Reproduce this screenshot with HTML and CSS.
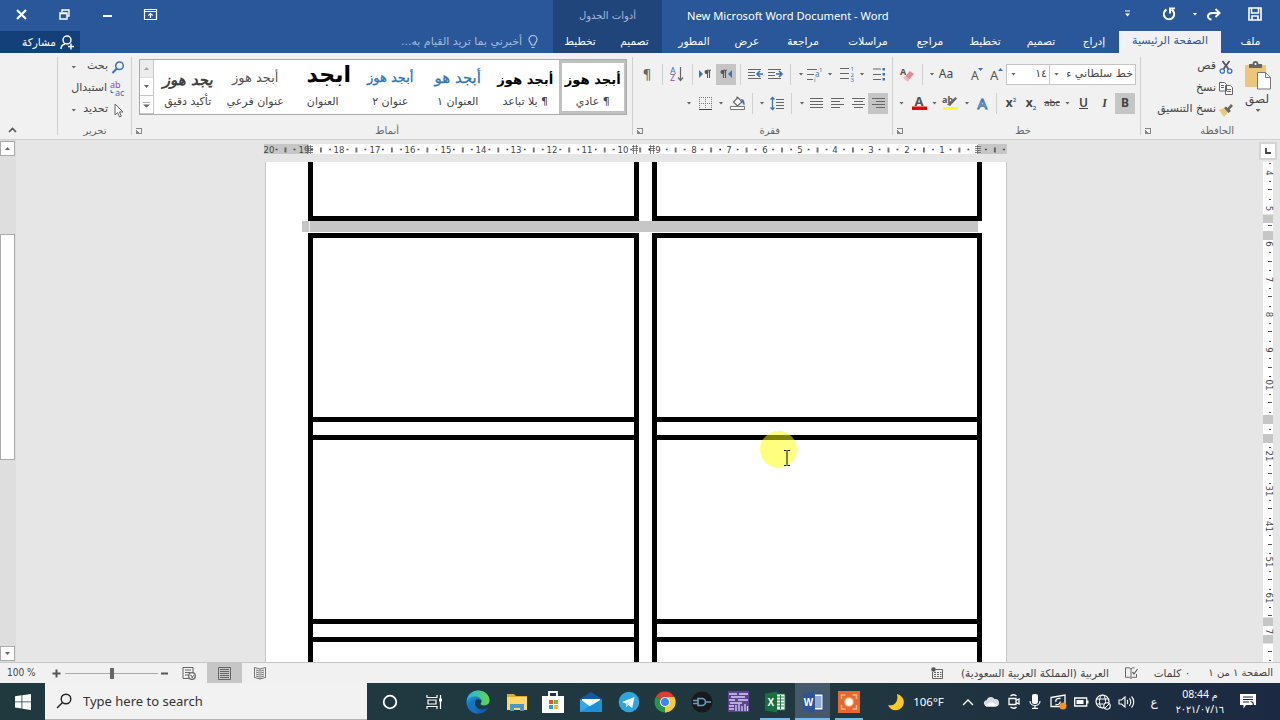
FILE: index.html
```html
<!DOCTYPE html>
<html lang="ar">
<head>
  <meta charset="utf-8" />
  <title>New Microsoft Word Document - Word</title>
  <link rel="stylesheet" href="styles.css">
</head>
<body>
  <!-- Title bar -->
  <header class="title-bar">
    <svg width="13" height="13" viewBox="0 0 13 13"><path d="M2 2l9 9M11 2l-9 9" stroke="#fff" stroke-width="2.2"/></svg>
    <svg width="11" height="11" viewBox="0 0 11 11"><path d="M3 3V1h7v6H8M1 4h7v6H1zM1 4.5h7" fill="none" stroke="#fff" stroke-width="1.4"/></svg>
    <svg width="11" height="11" viewBox="0 0 11 11"><path d="M1 7h9" stroke="#fff" stroke-width="2"/></svg>
    <svg width="13" height="11" viewBox="0 0 13 11"><path d="M.5 .5h12v10H.5zM.5 2.5h12M6.500 9V4.500M4.300 6.500l2.200-2 2.200 2" fill="none" stroke="#fff" stroke-width="1.2"/></svg>
    <span></span>
    <span class="context-title" dir="rtl">أدوات الجدول</span>
    <span class="doc-title">New Microsoft Word Document - Word</span>
    <svg width="7" height="8" viewBox="0 0 7 8"><path d="M1 1h5" stroke="#fff"/><path d="M1 3.500h5L3.500 6.500z" fill="#fff"/></svg>
    <svg width="14" height="14" viewBox="0 0 14 14"><path d="M4.500 2.500A5.200 5.200 0 1 0 9.500 2.500" fill="none" stroke="#fff" stroke-width="2"/><path d="M7 0.500h6v1.800H9v4.200H7z" fill="#fff"/></svg>
    <i class="arrow light"></i>
    <svg width="14" height="13" viewBox="0 0 14 13"><path d="M12 5H5.500C2 5 1 7 1 8.500S2.500 11.500 4.500 11.500M8.500 1l4 4-4 4" fill="none" stroke="#fff" stroke-width="2"/></svg>
    <svg width="14" height="14" viewBox="0 0 14 14"><path d="M1 1h12v12H1zM3.500 1v5h7V1M4 13V9h6v4" fill="none" stroke="#fff" stroke-width="1.6"/></svg>
  </header>

  <!-- Ribbon tabs -->
  <nav class="tabs">
    <span class="share"><b dir="rtl">مشاركة</b>
      <svg width="14" height="15" viewBox="0 0 14 15"><circle cx="7" cy="5" r="4" fill="none" stroke="#fff" stroke-width="1.4"/><path d="M1 14c0-3 2-4.500 4-5M8 11.500h6M11 8.500v6" fill="none" stroke="#fff" stroke-width="1.4"/></svg>
    </span>
    <span></span>
    <span class="tell-me"><span dir="rtl">أخبرني بما تريد القيام به...</span>
      <svg width="10" height="14" viewBox="0 0 10 14"><path d="M3.500 10C3.500 8 1 7 1 4.500a4 4 0 0 1 8 0C9 7 6.500 8 6.500 10zM3.500 12.500h3" fill="none" stroke="#b5c8e6" stroke-width="1.2"/></svg>
    </span>
    <span class="context">تخطيط</span>
    <span class="context">تصميم</span>
    <span>المطور</span>
    <span>عرض</span>
    <span>مراجعة</span>
    <span>مراسلات</span>
    <span>مراجع</span>
    <span>تخطيط</span>
    <span>تصميم</span>
    <span class="insert">إدراج</span>
    <span class="active">الصفحة الرئيسية</span>
    <span>ملف</span>
  </nav>

  <!-- Ribbon -->
  <section class="ribbon">
    <div class="group collapse">
      <svg width="9" height="6" viewBox="0 0 9 6"><path d="M1 5l3.500-3.500L8 5" fill="none" stroke="#555" stroke-width="1.6"/></svg>
    </div>

    <div class="group editing">
      <div class="commands" dir="rtl">
        <div class="command">
          <svg width="14" height="13" viewBox="0 0 14 13"><circle cx="8.500" cy="4.800" r="3.800" fill="none" stroke="#3b73b9" stroke-width="1.5"/><path d="M5.800 7.500L1.500 12" stroke="#3b73b9" stroke-width="2"/></svg>
          <span>بحث</span><i class="arrow"></i>
        </div>
        <div class="command">
          <svg width="15" height="16" viewBox="0 0 15 16"><text x="0" y="7" class="glyph purple">ab</text><text x="5" y="14.500" class="glyph blue">ac</text><path d="M1 9v2.500h2.500" fill="none" stroke="#3b73b9"/></svg>
          <span>استبدال</span>
        </div>
        <div class="command">
          <svg width="14" height="15" viewBox="0 0 14 15"><path d="M4 1v11l2.600-2.400L8.500 14l1.800-.8-1.900-4.200H12z" fill="#fff" stroke="#666"/></svg>
          <span>تحديد</span><i class="arrow"></i>
        </div>
      </div>
      <div class="group-label">تحرير</div>
    </div>

    <div class="group styles">
      <div class="gallery">
        <div class="gallery-scroll">
          <span class="disabled"><i class="arrow up"></i></span>
          <span><i class="arrow"></i></span>
          <span><i class="arrow more"></i></span>
        </div>
        <div class="style subtle"><b>يجد هوز</b><span>تأكيد دقيق</span></div>
        <div class="style subtitle"><b>أبجد هوز</b><span>عنوان فرعي</span></div>
        <div class="style big"><b>ابجد</b><span>العنوان</span></div>
        <div class="style heading"><b>أبجد هوز</b><span>عنوان ٢</span></div>
        <div class="style heading first"><b>أبجد هو</b><span>العنوان ١</span></div>
        <div class="style"><b>أبجد هوز</b><span dir="rtl">¶ بلا تباعد</span></div>
        <div class="style selected"><b>أبجد هوز</b><span dir="rtl">¶ عادي</span></div>
      </div>
      <div class="group-label"><i class="launcher"></i>أنماط</div>
    </div>

    <div class="group paragraph">
      <div class="row row-top">
        <span class="pilcrow">¶</span>
        <i class="sep"></i>
        <svg width="14" height="16" viewBox="0 0 14 16"><text x="0" y="7.500" class="glyph blue">A</text><text x="0" y="15" class="glyph purple">Z</text><path d="M10.500 1v13M8 11.500l2.500 3 2.500-3" fill="none" stroke="#666" stroke-width="1.2"/></svg>
        <i class="sep"></i>
        <svg width="12" height="10" viewBox="0 0 12 10"><path d="M0 1l4 4-4 4z" fill="#3b73b9"/><path d="M8.500 9V1.500M10.500 9V1.500M12 1.200H8" stroke="#555" stroke-width="1.100"/><circle cx="7.500" cy="3" r="2" fill="#555"/></svg>
        <span class="on"><svg width="12" height="10" viewBox="0 0 12 10"><path d="M12 1L8 5l4 4z" fill="#3b73b9"/><path d="M3.500 9V1.500M5.500 9V1.500M7 1.200H3" stroke="#555" stroke-width="1.100"/><circle cx="2.500" cy="3" r="2" fill="#555"/></svg></span>
        <i class="sep"></i>
        <svg width="15" height="12" viewBox="0 0 15 12"><path d="M0 1.500h13M0 4.500h7M0 7.500h7M0 10.500h13" stroke="#666"/><path d="M15 6H9.500M12 3L9 6l3 3" fill="none" stroke="#3b73b9" stroke-width="1.700"/></svg>
        <svg width="15" height="12" viewBox="0 0 15 12"><path d="M0 1.500h13M0 4.500h7M0 7.500h7M0 10.500h13" stroke="#666"/><path d="M8 6h6M11 3l3 3-3 3" fill="none" stroke="#3b73b9" stroke-width="1.700"/></svg>
        <i class="sep"></i>
        <i class="arrow"></i>
        <svg width="16" height="16" viewBox="0 0 16 16"><path d="M0 3.500h10M0 8.500h7M0 13.500h6" stroke="#666"/><text x="12" y="5.500" class="glyph tiny blue">1</text><text x="8" y="11" class="glyph small blue">a</text><text x="7" y="16" class="glyph tiny blue">i</text></svg>
        <i class="arrow"></i>
        <svg width="14" height="16" viewBox="0 0 14 16"><path d="M0 2.500h9M0 7.500h9M0 12.500h9" stroke="#666"/><text x="10.500" y="5" class="glyph tiny blue">1</text><text x="10.500" y="10.500" class="glyph tiny blue">2</text><text x="10.500" y="16" class="glyph tiny blue">3</text></svg>
        <i class="arrow"></i>
        <svg width="12" height="14" viewBox="0 0 12 14"><path d="M0 2h8M0 7.500h8M0 12.500h8" stroke="#666"/><path d="M9.500 1h2.500v2.500H9.500zM9.500 6H12v2.500H9.500zM9.500 11H12v2.500H9.500z" fill="#3b73b9"/></svg>
      </div>
      <div class="row row-bottom">
        <span></span>
        <i class="arrow"></i>
        <svg width="13" height="13" viewBox="0 0 13 13"><path d="M.5 0v12M12.500 0v12M0 .5h13M6.500 0v12M0 6.500h13" fill="none" stroke="#777" stroke-dasharray="1 1"/><path d="M0 12.500h13" stroke="#444"/></svg>
        <i class="arrow"></i>
        <svg width="16" height="16" viewBox="0 0 16 16"><path d="M3.500 7L8 2.500 12 7l-4.500 4zM7 4.500V1.500" fill="#fff" stroke="#666" stroke-width="1.200"/><path d="M11 4c2.500 0 4 2 3.500 6.500-2-1-2-3.500-3.500-6.500z" fill="#3b73b9"/><path d="M.5 11.500h14v3H.5z" fill="#fff" stroke="#777"/></svg>
        <i class="sep"></i>
        <i class="arrow"></i>
        <svg width="14" height="15" viewBox="0 0 14 15"><path d="M6 3.500h8M6 6.500h8M6 9.500h8M6 12.500h8" stroke="#666"/><path d="M2.500 1.500v12M.5 3.500l2-2 2 2M.5 11.500l2 2 2-2" fill="none" stroke="#3b73b9" stroke-width="1.300"/></svg>
        <i class="sep"></i>
        <i class="arrow"></i>
        <svg width="13" height="12" viewBox="0 0 13 12"><path d="M0 1.500h13M0 4.500h13M0 7.500h13M0 10.500h13" stroke="#666"/></svg>
        <svg width="13" height="12" viewBox="0 0 13 12"><path d="M0 1.500h13M0 4.500h9M0 7.500h13M0 10.500h9" stroke="#666"/></svg>
        <svg width="13" height="12" viewBox="0 0 13 12"><path d="M0 1.500h13M2 4.500h9M0 7.500h13M2 10.500h9" stroke="#666"/></svg>
        <span class="on"><svg width="13" height="12" viewBox="0 0 13 12"><path d="M0 1.500h13M4 4.500h9M0 7.500h13M4 10.500h9" stroke="#666"/></svg></span>
      </div>
      <div class="group-label"><i class="launcher"></i>فقرة</div>
    </div>

    <div class="group font">
      <div class="row row-top">
        <svg width="14" height="15" viewBox="0 0 14 15"><text x="0" y="8" class="glyph bold">A</text><path d="M3.500 11L10 4l4 3-6.500 7.500z" fill="#e58a97"/><path d="M3.500 11l4 3.500 2-2.300-4-3.400z" fill="#efb5bd"/></svg>
        <i class="sep"></i>
        <i class="arrow"></i>
        <span class="aa">Aa</span>
        <span></span>
        <svg width="12" height="15" viewBox="0 0 12 15"><text x="0" y="13" class="glyph mid">A</text><path d="M7 1h5L9.500 4z" fill="#3b73b9"/></svg>
        <svg width="13" height="15" viewBox="0 0 13 15"><text x="0" y="13" class="glyph large">A</text><path d="M8 4h5L10.500 1z" fill="#3b73b9"/></svg>
        <span class="combo"><i class="arrow"></i>١٤</span>
        <span class="combo"><i class="arrow"></i><span dir="rtl">خط سلطاني ء</span></span>
      </div>
      <div class="row row-bottom">
        <i class="arrow"></i>
        <svg width="16" height="16" viewBox="0 0 16 16"><text x="3.500" y="10.500" class="glyph large bold">A</text><path d="M1 11.500h15v3.500H1z" fill="#e80000"/></svg>
        <i class="arrow"></i>
        <svg width="16" height="16" viewBox="0 0 16 16"><text x="0" y="7.500" class="glyph bold">ab</text><path d="M5 9.500L13.500 2l1.500 1.500L8 11z" fill="#666"/><path d="M1 12h15v3H1z" fill="#ffff1a"/></svg>
        <i class="arrow"></i>
        <svg width="14" height="15" viewBox="0 0 14 15"><text x="1.500" y="12.500" class="glyph outline">A</text></svg>
        <i class="sep"></i>
        <span class="letter">x<sup>2</sup></span>
        <span class="letter">x<sub>2</sub></span>
        <span class="letter strike">abc</span>
        <i class="arrow"></i>
        <span class="letter underline">U</span>
        <span class="letter italic">I</span>
        <span class="letter on">B</span>
      </div>
      <div class="group-label"><i class="launcher"></i>خط</div>
    </div>

    <div class="group clipboard">
      <div class="clipboard-body" dir="rtl">
        <div class="paste">
          <svg width="28" height="29" viewBox="0 0 28 29"><path d="M1 4h21v22H1z" fill="#eec679"/><path d="M5 3h3.500a3 3 0 0 1 6 0H18v4H5z" fill="#666"/><circle cx="11.500" cy="3" r="1" fill="#fff"/><path d="M13.500 11.500h8l5 5v11.500h-13z" fill="#fff" stroke="#777"/><path d="M21.500 11.500v5h5" fill="none" stroke="#777"/></svg>
          <span>لصق</span>
          <i class="arrow"></i>
        </div>
        <div class="commands">
          <div class="command">
            <svg width="14" height="14" viewBox="0 0 14 14"><path d="M3.500 1l6 8M10.500 1l-6 8" stroke="#555" stroke-width="1.800"/><circle cx="3.300" cy="11" r="2.200" fill="none" stroke="#3b73b9" stroke-width="1.300"/><circle cx="10.700" cy="11" r="2.200" fill="none" stroke="#3b73b9" stroke-width="1.300"/></svg>
            <span>قص</span>
          </div>
          <div class="command">
            <svg width="14" height="13" viewBox="0 0 14 13"><path d="M.5.5h5l2 2V9h-7zM6.500 3.500h5l2 2v7h-7z" fill="#fff" stroke="#666"/><path d="M2 3.500h3M2 5.500h3M8 7.500h4M8 9.500h4" stroke="#3b73b9"/></svg>
            <span>نسخ</span>
          </div>
          <div class="command">
            <svg width="14" height="13" viewBox="0 0 14 13"><path d="M0 6l5-2 4 4-4 5z" fill="#eec679"/><path d="M5 4l2-1.500 1.500 1.500L12 0l2 2-3.500 3.500L12 7l-2.500 2z" fill="#666"/></svg>
            <span>نسخ التنسيق</span>
          </div>
        </div>
      </div>
      <div class="group-label"><i class="launcher"></i>الحافظة</div>
    </div>
  </section>

  <!-- Document area -->
  <main class="workspace">
    <div class="scrollbar">
      <span class="scroll-button"><i class="arrow up"></i></span>
      <span class="scroll-thumb"></span>
      <span class="scroll-button"><i class="arrow"></i></span>
    </div>

    <div class="document">
      <svg class="ruler" width="743" height="11" viewBox="264 144 743 11">
        <defs>
          <pattern id="ticks" x="941.700" y="144" width="35.470" height="11" patternUnits="userSpaceOnUse">
            <path d="M8 5.500h1.500M26 5.500h1.500" stroke="#222" stroke-width="1.500"/>
            <path d="M17.700 3.500v5" stroke="#222" stroke-width="1.200"/>
          </pattern>
        </defs>
        <path d="M264 144h743v10H264z" fill="#c6c6c6"/>
        <path d="M309 144h669v10H309z" fill="#fff"/>
        <path d="M275 144h732v11H275z" fill="url(#ticks)"/>
        <g class="ruler-text">
          <text x="269" y="153.300">20</text><text x="304" y="153.300">19</text><text x="339" y="153.300">18</text><text x="375" y="153.300">17</text>
          <text x="410" y="153.300">16</text><text x="446" y="153.300">15</text><text x="481" y="153.300">14</text><text x="516" y="153.300">13</text>
          <text x="552" y="153.300">12</text><text x="587" y="153.300">11</text><text x="623" y="153.300">10</text><text x="658" y="153.300">9</text>
          <text x="694" y="153.300">8</text><text x="729" y="153.300">7</text><text x="765" y="153.300">6</text><text x="800" y="153.300">5</text>
          <text x="835" y="153.300">4</text><text x="871" y="153.300">3</text><text x="907" y="153.300">2</text><text x="942" y="153.300">1</text>
        </g>
        <path d="M306 146.500h7M306 148.500h7M306 150.500h7M306 152.500h7M307.500 145v9M310.500 145v9M632 146.500h6M632 148.500h6M632 150.500h6M633.500 145v9M636.500 145v9M649 146.500h6M649 148.500h6M649 150.500h6M650.500 145v9M653.500 145v9M975 146.500h6M975 148.500h6M975 150.500h6M975 152.500h6M977.500 145v9" stroke="#666" stroke-width=".8"/>
      </svg>

      <div class="page">
        <div class="cards cards-top"><div></div><div></div></div>
        <div class="selected-row"></div>
        <div class="cards cards-bottom">
          <div class="card-column"><p></p><p class="strip"></p><p></p><p class="strip"></p></div>
          <div class="card-column"><p></p><p class="strip"></p><p></p><p class="strip"></p></div>
        </div>
      </div>
    </div>

    <div class="side-ruler">
      <span class="tab-stop"><svg width="6" height="6" viewBox="0 0 6 6"><path d="M1 0v5h5" fill="none" stroke="#444" stroke-width="1.800"/></svg></span>
      <svg width="10" height="500" viewBox="1263 162 10 500">
        <path d="M1263 162h10v500h-10z" fill="#fff"/>
        <path d="M1263 214.500h10v8.500h-10zM1263 231h10v9h-10zM1263 415h10v9h-10zM1263 434h10v9h-10zM1263 617.500h10v8.500h-10zM1263 635h10v8.500h-10z" fill="#c6c6c6"/>
        <path d="M1268 189.500h4M1268 225.500h4M1268 261.500h4M1268 296.500h4M1268 331.500h4M1268 367.500h4M1268 402.500h4M1268 473.500h4M1268 508.500h4M1268 544.500h4M1268 579.500h4M1268 615.500h4M1268 651.500h4" stroke="#555"/>
        <path d="M1269 163.500h2M1269 181.500h2M1269 199.500h2M1269 252.500h2M1269 270.500h2M1269 288.500h2M1269 306.500h2M1269 323.500h2M1269 341.500h2M1269 358.500h2M1269 376.500h2M1269 394.500h2M1269 412.500h2M1269 429.500h2M1269 447.500h2M1269 465.500h2M1269 483.500h2M1269 500.500h2M1269 518.500h2M1269 535.500h2M1269 553.500h2M1269 571.500h2M1269 589.500h2M1269 607.500h2M1269 660.500h2" stroke="#444"/>
        <g class="ruler-text side">
          <text transform="translate(1266 173) rotate(90)">4</text>
          <text transform="translate(1266 208.500) rotate(90)">5</text>
          <text transform="translate(1266 244) rotate(90)">6</text>
          <text transform="translate(1266 279.500) rotate(90)">7</text>
          <text transform="translate(1266 314.500) rotate(90)">8</text>
          <text transform="translate(1266 350) rotate(90)">9</text>
          <text transform="translate(1266 385) rotate(90)">01</text>
          <text transform="translate(1266 456) rotate(90)">21</text>
          <text transform="translate(1266 491) rotate(90)">31</text>
          <text transform="translate(1266 526.500) rotate(90)">41</text>
          <text transform="translate(1266 562) rotate(90)">51</text>
          <text transform="translate(1266 598) rotate(90)">61</text>
          <text transform="translate(1266 631.500) rotate(90)">7</text>
        </g>
      </svg>
    </div>

    <div class="pointer-halo"></div>
    <svg class="pointer" width="8" height="16" viewBox="0 0 8 16"><path d="M1 .5h2.500M4.500 .5H7M4 1v14M1 15.500h2.500M4.500 15.500H7" fill="none" stroke="#000"/></svg>
  </main>

  <!-- Status bar -->
  <footer class="status-bar">
    <span class="zoom-value">100 %</span>
    <svg width="9" height="9" viewBox="0 0 9 9"><path d="M.5 4.500h8M4.500 .5v8" stroke="#555" stroke-width="2"/></svg>
    <span class="slider"><i></i></span>
    <svg width="7" height="9" viewBox="0 0 7 9"><path d="M0 4.500h7" stroke="#555" stroke-width="2"/></svg>
    <svg width="14" height="13" viewBox="0 0 14 13"><path d="M7 11.500H1V.5h10v5M3 3h6M3 5.500h5M3 8h3" fill="none" stroke="#666"/><circle cx="10" cy="9" r="3.300" fill="#fff" stroke="#666" stroke-width="1.300"/><path d="M8 8l2 1v2l2-3" fill="none" stroke="#666"/></svg>
    <span class="view-on"><svg width="13" height="13" viewBox="0 0 13 13"><path d="M.5.500h12v12H.5zM2 2.500h9M2 4.500h9M2 6.500h9M2 8.500h9M2 10.500h9" fill="none" stroke="#666"/></svg></span>
    <svg width="12" height="13" viewBox="0 0 12 13"><path d="M6 2v10M6 2L.5 .5v10L6 12l5.500-1.500V.5zM2 3l3 1M2 5l3 1M2 7l3 1M2 9l3 1M10 3L7 4M10 5L7 6M10 7L7 8M10 9l-3 1" fill="none" stroke="#666" stroke-width=".9"/></svg>
    <span></span>
    <svg width="12" height="12" viewBox="0 0 12 12"><path d="M5 2.500h6.500v9h-10V5" fill="none" stroke="#666"/><circle cx="2.500" cy="2.500" r="2.300" fill="#555"/><path d="M3 5.500h2M6 5.500h2M9 5.500h1.500M3 7.500h2M6 7.500h2M9 7.500h1.500M3 9.500h2M6 9.500h2M9 9.500h1.500" stroke="#666"/></svg>
    <span class="language" dir="rtl">العربية (المملكة العربية السعودية)</span>
    <svg width="13" height="12" viewBox="0 0 13 12"><path d="M6 2v9M6 2L4.500 .8H.5v9.500h4L6 11.500l1.500-1.200h4V7M6 2L7.500 .8h2" fill="none" stroke="#666"/><path d="M7.500 5l1.500 2 3.500-5" fill="none" stroke="#666" stroke-width="1.300"/></svg>
    <span class="words" dir="rtl">٠ كلمات</span>
    <span class="pages" dir="rtl">الصفحة ١ من ١</span>
  </footer>

  <!-- Windows taskbar -->
  <div class="taskbar">
    <span><svg width="16" height="16" viewBox="0 0 16 16"><path d="M0 2.300l6.500-1V7.500H0zM7.300 1.200L16 0v7.500H7.300zM0 8.300h6.500v6.200L0 13.600zM7.300 8.300H16V16l-8.700-1.300z" fill="#fff"/></svg></span>
    <span class="search">
      <svg width="16" height="16" viewBox="0 0 16 16"><circle cx="10" cy="6" r="4.800" fill="none" stroke="#222" stroke-width="1.400"/><path d="M6.500 9.500L1 15" stroke="#222" stroke-width="1.400"/></svg>
      Type here to search
    </span>
    <span><svg width="16" height="16" viewBox="0 0 16 16"><circle cx="8" cy="8" r="6.300" fill="none" stroke="#fff" stroke-width="1.800"/></svg></span>
    <span><svg width="17" height="16" viewBox="0 0 17 16"><path d="M1 1v2.500h10V1M1 15v-2.500h10V15M2 6h8v4H2zM14.500 1v14" fill="none" stroke="#fff" stroke-width="1.200"/><path d="M13 4.500h3v3h-3z" fill="#fff"/></svg></span>
    <span><svg width="24" height="24" viewBox="0 0 24 24">
      <defs>
        <linearGradient id="edgeTop" x1="0" x2="1"><stop offset="0" stop-color="#2badf0"/><stop offset="1" stop-color="#5fd848"/></linearGradient>
        <linearGradient id="edgeSide" y2="1"><stop offset="0" stop-color="#1b9de2"/><stop offset="1" stop-color="#0f4fa0"/></linearGradient>
      </defs>
      <circle cx="12" cy="12" r="11.500" fill="url(#edgeSide)"/>
      <path d="M.6 11C2 4 7 .5 12 .5c7 0 11.500 5 11.500 9.500 0 4-3 5.500-5.500 5.500s-3.500-1-3.500-1.800c0-.7 1-1 1-2.700 0-2-2-4.500-6-4.500S2 8.500.6 11z" fill="url(#edgeTop)"/>
      <path d="M9.500 10.500c-2 5 2 9 6 9 2.500 0 4.500-.8 6-1.800l.5 1 3-4-2-1c-1 1-3 1.800-5 1.800-2.500 0-3.500-1-3.500-1.800 0-.7 1-1 1-2.700 0-1.500-5-3-6-.5z" fill="#1d3a48"/>
      <path d="M9.500 10.500C6 15 8 21 13 23.300 8 24 3 20.500 2.500 16c0-4 4-6.500 7-5.500z" fill="#1673c4"/>
    </svg></span>
    <span><svg width="22" height="20" viewBox="0 0 22 20"><path d="M1 2h7l2 2h11v14H1z" fill="#e9a52c"/><path d="M1 5h20v13H1z" fill="#ffd866"/><path d="M4 19v-7h14v7h-4v-3H8v3z" fill="#4a97c9"/></svg></span>
    <span><svg width="22" height="24" viewBox="0 0 22 24"><path d="M7 7V2h8v5" fill="none" stroke="#fff" stroke-width="1.800"/><path d="M0 6h22v17H0z" fill="#fff"/><path d="M7 10h4v4H7z" fill="#e8532b"/><path d="M12 10h4v4h-4z" fill="#7cb928"/><path d="M7 15h4v4H7z" fill="#2a9fe0"/><path d="M12 15h4v4h-4z" fill="#f6b81a"/></svg></span>
    <span><svg width="24" height="22" viewBox="0 0 24 22"><path d="M1 8L12 1l11 7v3H1z" fill="#0d5ca8"/><path d="M3 8h18v4l-9 5-9-5z" fill="#fff"/><path d="M1 8l11 8 11-8v13H1z" fill="#33a7ea"/><path d="M1 21l22-13v13z" fill="#1e90d8"/></svg></span>
    <span><svg width="22" height="22" viewBox="0 0 22 22"><circle cx="11" cy="11" r="10.300" fill="#2fa5de"/><path d="M4 11l12.500-5-2.300 11-4-3-2 2-.3-3.500z" fill="#fff"/><path d="M8 12.500L14.500 8l-4.800 5.500-1.500 2.500z" fill="#b8d8ea"/></svg></span>
    <span><svg width="22" height="22" viewBox="0 0 22 22"><path d="M11 11L1.900 5.800A10.500 10.500 0 0 1 20.100 5.800z" fill="#e33b2e"/><path d="M11 11l9.100-5.200A10.500 10.500 0 0 1 11 21.500z" fill="#fcc934"/><path d="M11 11v10.500A10.500 10.500 0 0 1 1.900 5.800z" fill="#24984a"/><path d="M11 6h9.200a10.500 10.500 0 0 1-9.200 15.500l4.500-8z" fill="#fcc934"/><circle cx="11" cy="11" r="5" fill="#fff"/><circle cx="11" cy="11" r="4" fill="#4285f4"/></svg></span>
    <span><svg width="22" height="22" viewBox="0 0 22 22"><circle cx="11" cy="11" r="10.500" fill="#17191d"/><path d="M2 12.500h5M2 9.500h5M7 7.500h4a3.500 3.500 0 0 1 0 7H7zM15 11h5" fill="none" stroke="#6b9ec4" stroke-width="1.600"/></svg></span>
    <span><svg width="21" height="21" viewBox="0 0 21 21"><path d="M0 0h21v21H0z" fill="#5a4391"/><path d="M1 3h8M11 3h9M3 6h14M1 9h6M10 9h10M2 12h12M1 15h5M1 18h5M8 14v6M11 13v7M14 15v5M17 13v7M19.500 15v5" stroke="#d8cff0" stroke-width="1.300"/></svg></span>
    <span class="running"><svg width="22" height="22" viewBox="0 0 22 22"><path d="M12 3h9v16h-9z" fill="#fff" stroke="#1e7145"/><path d="M13 6h7M13 9h7M13 12h7M13 15h7M16.500 4v14" stroke="#1e7145"/><path d="M1 2.500L13 .5v21L1 19.500z" fill="#17703f"/><text x="3.500" y="15" class="app-letter">X</text></svg></span>
    <span class="running current"><svg width="22" height="22" viewBox="0 0 22 22"><path d="M12 3h9v16h-9z" fill="#fff" stroke="#2a5699"/><path d="M13 6h6.500M13 8h6.500M13 10h6.500M13 12h6.500M13 14h6.500M13 16h6.500" stroke="#2a5699"/><path d="M1 2.500L13 .5v21L1 19.500z" fill="#2a5699"/><text x="1.800" y="15" class="app-letter">W</text></svg></span>
    <span class="running"><svg width="22" height="22" viewBox="0 0 22 22"><path d="M0 0h22v22H0z" fill="#e9692c"/><path d="M3.500 8V4h4M14.500 4h4v4M18.500 14v4h-4M7.500 18h-4v-4" fill="none" stroke="#f5b392" stroke-width="1.500"/><circle cx="11" cy="11" r="5" fill="#f7a468"/><circle cx="11" cy="11" r="3.800" fill="#fff"/></svg></span>
    <span></span>
    <span><svg width="18" height="18" viewBox="0 0 18 18"><path d="M10 1c8 2 9 11 3 15-4 2.500-10 1.500-12-4 5 1.500 11-2 9-11z" fill="#fdc81f"/></svg></span>
    <span class="temperature">106°F</span>
    <span class="tray-toggle"><svg width="12" height="8" viewBox="0 0 12 8"><path d="M1 7l5-5 5 5" fill="none" stroke="#fff" stroke-width="1.400"/></svg></span>
    <span><svg width="16" height="11" viewBox="0 0 16 11"><path d="M3.500 10.500a3.200 3.200 0 0 1 0-6.300A4.500 4.500 0 0 1 11.500 3a3.800 3.800 0 0 1 1.500 7.500z" fill="#d8dce2"/><path d="M2 9.500L8 6l7 3-2 1.500H3.500z" fill="#fff"/></svg></span>
    <span><svg width="12" height="15" viewBox="0 0 12 15"><path d="M2.500 2c2-1.500 4.500-1.500 6 0M2.500 13c2 1.500 4.500 1.500 6 0M1 4.500h7v6H1zM8 6.500l3-1.500v5l-3-1.500" fill="none" stroke="#fff" stroke-width="1.300"/></svg></span>
    <span><svg width="12" height="15" viewBox="0 0 12 15"><rect x="3" y="0" width="6" height="10" rx="2" fill="#fff"/><path d="M1 7c0 6 10 6 10 0M6 11.500V14M3 14.300h6" fill="none" stroke="#fff" stroke-width="1.200"/></svg></span>
    <span><svg width="17" height="16" viewBox="0 0 17 16"><path d="M1 3.500L15 1v11.500H1z" fill="none" stroke="#fff" stroke-width="1.300"/><path d="M10.500 4.500C7 4 5 6 6 8M5.500 10.500c3 .5 5-1 4.500-3" fill="none" stroke="#fff" stroke-width="1.300"/><circle cx="13" cy="12" r="3.500" fill="#f59324"/></svg></span>
    <span><svg width="15" height="10" viewBox="0 0 15 10"><path d="M.7 1h12v8H.7z" fill="none" stroke="#fff" stroke-width="1.300"/><path d="M2.500 3h7v4h-7zM13 3.500h1.500v3H13z" fill="#fff"/></svg></span>
    <span><svg width="16" height="16" viewBox="0 0 16 16"><circle cx="7.500" cy="7.500" r="6.500" fill="none" stroke="#fff" stroke-width="1.200"/><ellipse cx="7.500" cy="7.500" rx="3" ry="6.500" fill="none" stroke="#fff"/><path d="M1.500 5h12M1.500 10h7" stroke="#fff"/><circle cx="12" cy="12" r="3.200" fill="#1c2c40" stroke="#fff" stroke-width="1.100"/><path d="M10 14l4-4" stroke="#fff"/></svg></span>
    <span><svg width="17" height="14" viewBox="0 0 17 14"><path d="M1 5h2.500L7 2v10L3.500 9H1zM9 5c1 1 1 3 0 4M11.300 3.300c2 2 2 5.500 0 7.500M13.500 1.500c3 3 3 8 0 11" fill="none" stroke="#fff" stroke-width="1.100"/></svg></span>
    <span class="keyboard">ع</span>
    <span class="clock"><b dir="ltr">08:44 م</b><b dir="ltr">٢٠٢١/٠٧/١٦</b></span>
    <span><svg width="16" height="17" viewBox="0 0 16 17"><path d="M0 1h16v11H6l-2.500 3.500V12H0z" fill="#fff"/><path d="M3 4h10M3 6.500h10M3 9h6" stroke="#1b2b45" stroke-width="1.200"/><path d="M10.500 8.500c3 0 4 4 1 5.500" fill="none" stroke="#1b2b45" stroke-width="1.200"/></svg></span>
  </div>
</body>
</html>
```
FILE: styles.css
```css
* {
  box-sizing: border-box;
}

body {
  margin: 0;
  width: 1280px;
  height: 720px;
  overflow: hidden;
  background: #e6e6e6;
  color: #444;
  font-family: "DejaVu Sans", sans-serif;
  font-size: 11px;
  line-height: 14px;
}

svg {
  display: block;
  flex: none;
  overflow: visible;
  direction: ltr;
}

b {
  font-weight: normal;
}

.arrow {
  flex: none;
  width: 5px;
  height: 3px;
  background: #666;
  clip-path: polygon(0 0, 100% 0, 50% 100%);
}

.arrow.up {
  transform: rotate(180deg);
}

.arrow.light {
  background: #fff;
}

.arrow.more {
  width: 7px;
  height: 6px;
  clip-path: polygon(0 0, 100% 0, 100% 1px, 0 1px, 0 3px, 100% 3px, 50% 100%, 0 3px);
}

/* Title bar */
.title-bar {
  display: grid;
  grid-template-columns: 43px 43px 43px 43px 381px 109px 445px 40px 44px 8px 30px 51px;
  height: 30px;
  align-items: center;
  justify-items: center;
  background: #2a579a;
  padding-bottom: 2px;
}

.context-title {
  align-self: stretch;
  justify-self: stretch;
  margin-bottom: -2px;
  padding-top: 9px;
  background: #20457b;
  color: #a6bbdb;
  font-size: 10px;
  text-align: center;
  white-space: nowrap;
}

.doc-title {
  justify-self: start;
  padding: 3px 0 0 25px;
  color: #fff;
  font-family: "Noto Sans", sans-serif;
  font-size: 11.150px;
  white-space: nowrap;
}

/* Tabs */
.tabs {
  display: grid;
  grid-template-columns: 80px 319px 154px 54px 55px 64px 42px 70px 60px 64px 46px 66px 45px 102px 59px;
  height: 23px;
  background: #2a579a;
  color: #fff;
  font-size: 10.500px;
  line-height: 22px;
  text-align: center;
  white-space: nowrap;
}

.tabs .context {
  background: #20457b;
}

.tabs .insert {
  padding-right: 5px;
}

.tabs .active {
  margin-top: 1px;
  background: #f1f1f1;
  color: #2a579a;
  font-size: 11px;
  line-height: 20px;
}

.share {
  display: flex;
  align-items: center;
  justify-content: flex-end;
  gap: 4px;
  padding-right: 6px;
  margin-top: 1px;
  background: #14407a;
}

.tell-me {
  display: flex;
  align-items: center;
  justify-content: flex-end;
  gap: 6px;
  padding-right: 15px;
  color: #a6bbdb;
  font-size: 11px;
}

/* Ribbon */
.ribbon {
  display: flex;
  height: 87px;
  background: #f1f1f1;
  border-bottom: 1px solid #d0d0d0;
}

.group {
  display: flex;
  flex-direction: column;
  flex: none;
  background: linear-gradient(#cfcfcf, #cfcfcf) right 4px / 1px 78px no-repeat;
}

.group-label {
  display: flex;
  align-items: center;
  justify-content: center;
  height: 14px;
  margin-top: auto;
  margin-bottom: 1px;
  color: #666;
  font-size: 10px;
}

.launcher {
  width: 6px;
  height: 6px;
  margin-right: auto;
  margin-left: 4px;
  border: 1px solid #888;
  border-left: 0;
  background: linear-gradient(45deg, #888 40%, transparent 40%);
}

.collapse {
  width: 58px;
  justify-content: flex-end;
  padding: 0 0 6px 8px;
}

.editing {
  width: 74px;
}

.commands {
  display: grid;
  grid-template-rows: 22px 21px 22px;
  padding: 3px 7px 0 14px;
}

.command {
  display: flex;
  align-items: center;
  gap: 3px;
  white-space: nowrap;
}

.command span {
  margin-top: -2px;
}

.command .arrow {
  margin-right: auto;
}

.styles {
  width: 501px;
}

.gallery {
  display: grid;
  grid-template-columns: 14px repeat(7, 67.500px);
  width: 488px;
  height: 56px;
  margin: 6px 0 0 7px;
  border: 1px solid #ababab;
  background: #fff;
  overflow: hidden;
}

.gallery-scroll {
  display: grid;
  grid-template-rows: 1fr 1fr 1fr;
  border-right: 1px solid #c6c6c6;
}

.gallery-scroll span {
  display: grid;
  place-items: center;
  border-bottom: 1px solid #c6c6c6;
}

.gallery-scroll .disabled {
  background: #e1e1e1;
  opacity: .6;
}

.style {
  display: flex;
  flex-direction: column;
  align-items: center;
  justify-content: space-between;
  padding: 10px 0 5px;
  white-space: nowrap;
}

.style b {
  color: #000;
  font-weight: bold;
  font-size: 13.200px;
  line-height: 20px;
}

.style.selected {
  border: 3px solid #c0c0c0;
  padding: 7px 0 2px;
}

.style.heading {
  padding-top: 8px;
}

.style.heading b {
  color: #2e74b5;
  font-weight: normal;
  font-size: 13px;
  -webkit-text-stroke: .3px #2e74b5;
}

.style.heading.first b {
  font-size: 15px;
}

.style.big b {
  padding-left: 12px;
  font-size: 22px;
  line-height: 10px;
}

.style.subtitle {
  padding-top: 8px;
}

.style.subtitle b {
  color: #555;
  font-weight: normal;
  font-size: 13px;
}

.style.subtle b {
  color: #404040;
  font-size: 15px;
  font-style: italic;
}

.styles .group-label {
  padding-right: 234px;
}

.row {
  display: grid;
  height: 22px;
  align-items: center;
  justify-items: center;
}

.row + .row {
  margin-top: 7px;
}

.row-top {
  margin-top: 10px;
}

.sep {
  width: 1px;
  height: 21px;
  background: #d0d0d0;
}

.on {
  display: grid;
  place-items: center;
  width: 20px;
  height: 21px;
  background: #c5c5c5;
}

.paragraph {
  width: 260px;
}

.paragraph .row-top {
  grid-template-columns: 28px 2px 28px 2px 23px 20px 8px 22px 19px 10px 12px 16px 14px 20px 10px 24px;
}

.paragraph .row-bottom {
  grid-template-columns: 49px 14px 18px 14px 20px 8px 12px 18px 11px 10px 19px 22px 20px 20px;
}

.paragraph .group-label {
  padding-right: 113px;
}

.pilcrow {
  color: #666;
  font-size: 14px;
}

.font {
  width: 248px;
}

.font .row-top {
  grid-template-columns: 27px 4px 16px 12px 15px 20px 19px 44px 86px;
}

.font .row-bottom {
  grid-template-columns: 17px 18px 13px 18px 16px 15px 12px 18px 22px 20px 11px 21px 21px 20px;
}

.font .group-label {
  padding-right: 110px;
}

.aa {
  font-family: "Noto Sans", sans-serif;
  font-size: 12px;
}

.combo {
  display: flex;
  align-items: center;
  justify-content: space-between;
  width: 100%;
  height: 21px;
  padding: 0 2px 0 4px;
  border: 1px solid #c6c6c6;
  background: #fff;
  white-space: nowrap;
}

.combo + .combo {
  border-left: 0;
}

.letter {
  color: #444;
  font-family: "Noto Sans", sans-serif;
  font-size: 12px;
  font-weight: bold;
  line-height: 12px;
}

.letter sup,
.letter sub {
  color: #3b73b9;
  font-size: 6px;
  line-height: 0;
}

.letter.strike {
  font-size: 9.500px;
  font-weight: normal;
  text-decoration: line-through;
}

.letter.underline {
  font-weight: 600;
  text-decoration: underline;
}

.letter.italic {
  font-family: "Liberation Serif", serif;
  font-style: italic;
}

.glyph {
  fill: #555;
  font-family: "Noto Sans", sans-serif;
  font-size: 9px;
}

.glyph.mid {
  font-size: 12px;
}

.glyph.large {
  font-size: 13px;
}

.glyph.small {
  font-size: 8px;
}

.glyph.tiny {
  font-size: 6px;
}

.glyph.bold {
  font-weight: bold;
}

.glyph.blue {
  fill: #3b73b9;
}

.glyph.purple {
  fill: #8d4fa8;
}

.glyph.outline {
  fill: #fff;
  stroke: #3b73b9;
  stroke-width: 1;
  font-size: 15px;
}

.clipboard {
  width: 139px;
  background: none;
}

.clipboard-body {
  display: flex;
}

.clipboard .commands {
  flex: 1;
  padding: 3px 3px 0 0;
}

.paste {
  display: flex;
  flex-direction: column;
  align-items: center;
  width: 44px;
  padding: 8px 0 0 0;
  font-size: 12px;
}

.paste span {
  margin: 2px 2px 3px 0;
}

.clipboard .group-label {
  padding-right: 46px;
}

/* Workspace */
.workspace {
  position: relative;
  display: flex;
  height: 522px;
}

.scrollbar {
  display: flex;
  flex-direction: column;
  justify-content: space-between;
  width: 16px;
  padding: 1px 1px 1px 0;
  background: #dedede;
}

.scroll-button,
.scroll-thumb {
  display: grid;
  place-items: center;
  width: 15px;
  height: 15px;
  border: 1px solid #ababab;
  background: #fff;
}

.scroll-thumb {
  height: 226px;
  margin-bottom: 108px;
}

.document {
  width: 1247px;
  padding: 4px 0 0 248px;
}

.page {
  width: 742px;
  height: 500px;
  margin: 7px 0 0 1px;
  background: #fff;
  border: 1px solid #c9c9c9;
  border-top: 0;
  border-bottom: 0;
  overflow: hidden;
}

.cards {
  display: grid;
  grid-template-columns: 331px 330px;
  column-gap: 13px;
  margin-left: 42px;
}

.cards-top {
  height: 59px;
}

.cards-top div {
  border: 5px solid #000;
  border-top: 0;
}

.selected-row {
  width: 676px;
  height: 11px;
  margin: 0 0 1px 36px;
  background: linear-gradient(90deg, #c6c6c6 7px, #efefef 7px, #efefef 8px, #c6c6c6 8px);
}

.card-column {
  border: 5px solid #000;
  border-bottom: 0;
  height: 430px;
}

.card-column p {
  height: 184px;
  margin: 0;
  border-bottom: 5px solid #000;
}

.card-column .strip {
  height: 18px;
}

.ruler-text {
  fill: #444;
  font-family: "DejaVu Sans Condensed", sans-serif;
  font-size: 9.500px;
  text-anchor: middle;
}

.side-ruler {
  display: flex;
  flex-direction: column;
  align-items: center;
  width: 17px;
  padding-top: 2px;
  margin-right: 4px;
}

.tab-stop {
  display: grid;
  place-items: center;
  width: 18px;
  height: 18px;
  margin-bottom: 2px;
  border: 2px solid #d4d4d4;
  background: #fff;
}

.pointer-halo {
  position: absolute;
  left: 760px;
  top: 291px;
  width: 37px;
  height: 37px;
  border-radius: 50%;
  background: rgba(255, 255, 0, .5);
}

.pointer {
  position: absolute;
  left: 783px;
  top: 310px;
}

/* Status bar */
.status-bar {
  display: grid;
  grid-template-columns: 46px 20px 91px 14px 36px 35px 36px 649px 20px 169px 30px 43px 91px;
  height: 21px;
  align-items: center;
  justify-items: center;
  background: #f1f1f1;
  border-top: 1px solid #c6c6c6;
  font-size: 10.500px;
  white-space: nowrap;
}

.zoom-value {
  justify-self: start;
  padding-left: 7px;
  font-family: "DejaVu Sans Condensed", sans-serif;
  font-size: 10px;
}

.slider {
  display: grid;
  place-items: center;
  width: 93px;
  height: 11px;
  background: linear-gradient(#aaa, #aaa) center / 100% 1px no-repeat;
}

.slider i {
  width: 4px;
  height: 11px;
  background: #666;
}

.view-on {
  display: grid;
  place-items: center;
  width: 100%;
  height: 20px;
  background: #c6c6c6;
}

.language {
  padding-left: 7px;
}

.words {
  padding-left: 9px;
}

.pages {
  justify-self: end;
  padding-right: 7px;
  font-size: 10px;
}

/* Taskbar */
.taskbar {
  display: grid;
  grid-template-columns: 45px 322px 45px 44px 43px 35px 37px 40px 35px 38px 36px 36px 38px 37px 36px 17px 24px 41px 30px 24px 22px 20px 26px 20px 24px 22px 34px 58px 38px;
  height: 37px;
  background: linear-gradient(90deg, #20393f, #20373f 65%, #1b2942);
}

.taskbar > span {
  display: grid;
  place-items: center;
}

.taskbar > .search {
  display: flex;
  align-items: center;
  gap: 11px;
  padding-left: 11px;
  background: #f2f2f2;
  border-bottom: 1px solid #b5b5b5;
  color: #333;
  font-family: "Noto Sans", sans-serif;
  font-size: 13px;
}

.taskbar > .running {
  margin: 0 4px;
  box-shadow: inset 0 -2px #76b9ed;
}

.taskbar > .current {
  margin: 0 1px;
  background: #45596a;
}

.app-letter {
  fill: #fff;
  font-family: "Liberation Sans", sans-serif;
  font-size: 10px;
  font-weight: bold;
}

.temperature {
  color: #fff;
  font-family: "Noto Sans", sans-serif;
  font-size: 11.500px;
}

.tray-toggle {
  padding-left: 8px;
}

.keyboard {
  color: #fff;
  font-size: 12px;
}

.taskbar > .clock {
  align-content: center;
  color: #fff;
  font-family: "Noto Sans", "DejaVu Sans Condensed", sans-serif;
  font-size: 10.500px;
  line-height: 15px;
  white-space: nowrap;
}
```
